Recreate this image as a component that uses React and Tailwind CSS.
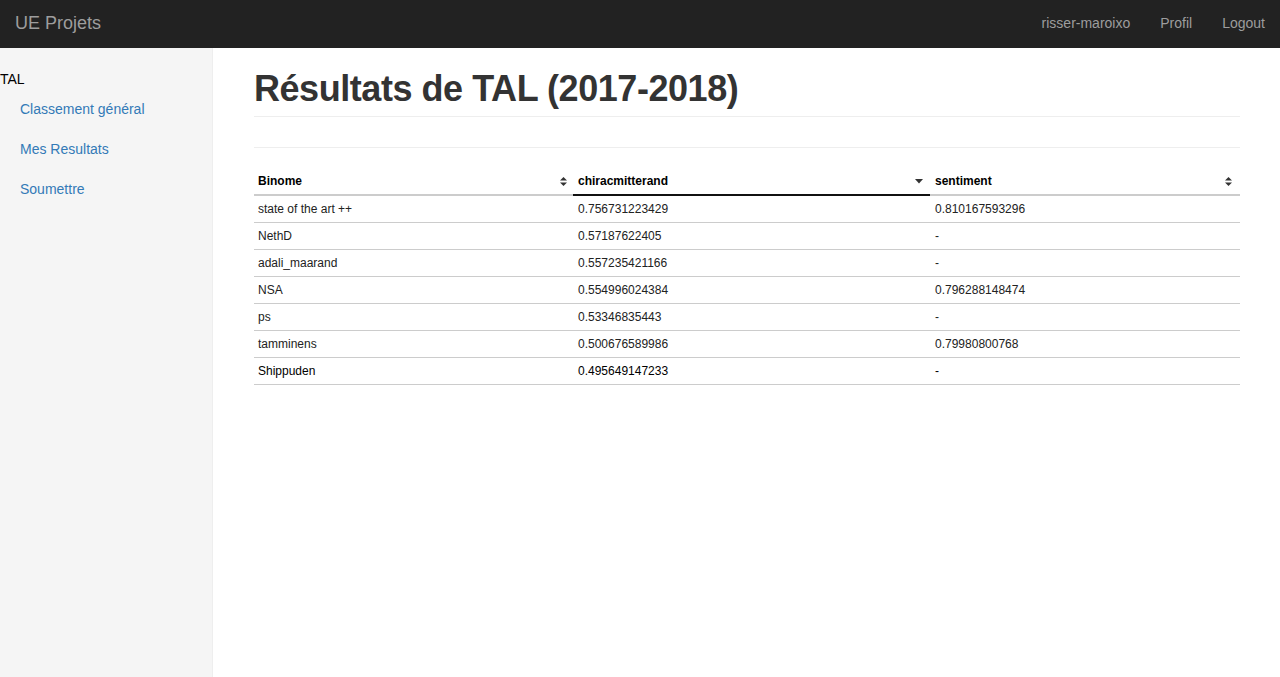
import React from 'react';

const rows = [
  ['state of the art ++', '0.756731223429', '0.810167593296'],
  ['NethD', '0.57187622405', '-'],
  ['adali_maarand', '0.557235421166', '-'],
  ['NSA', '0.554996024384', '0.796288148474'],
  ['ps', '0.53346835443', '-'],
  ['tamminens', '0.500676589986', '0.79980800768'],
  ['Shippuden', '0.495649147233', '-'],
];

function SortBoth() {
  return (
    <svg width="7" height="9" viewBox="0 0 7 9" className="shrink-0">
      <path d="M3.5 0L7 3.5H0z" fill="#333" />
      <path d="M3.5 9L0 5.5H7z" fill="#333" />
    </svg>
  );
}

function SortDesc() {
  return (
    <svg width="8" height="5" viewBox="0 0 8 5" className="shrink-0">
      <path d="M0 0H8L4 4.5z" fill="#333" />
    </svg>
  );
}

export default function App() {
  return (
    <div className="min-h-screen flex flex-col bg-white" style={{ fontFamily: '"Liberation Sans", Arial, sans-serif' }}>
      {/* Navbar */}
      <nav className="h-[48px] bg-[#222] flex items-center justify-between shrink-0 pb-[2px]">
        <span className="pl-[15px] text-[18px] text-[#9d9d9d]">UE Projets</span>
        <ul className="flex items-center pr-[15px] text-[14px] text-[#9d9d9d]">
          <li className="px-[15px]">risser-maroixo</li>
          <li className="px-[15px]">Profil</li>
          <li className="pl-[15px]">Logout</li>
        </ul>
      </nav>

      <div className="flex flex-1">
        {/* Sidebar */}
        <aside className="w-[213px] shrink-0 bg-[#f5f5f5] border-r border-[#eee] pt-[21px] text-[14px]">
          <div className="text-[#000] leading-[20px]">TAL</div>
          <ul>
            <li className="pl-[20px] h-[40px] flex items-center text-[#337ab7]">Classement général</li>
            <li className="pl-[20px] h-[40px] flex items-center text-[#337ab7]">Mes Resultats</li>
            <li className="pl-[20px] h-[40px] flex items-center text-[#337ab7]">Soumettre</li>
          </ul>
        </aside>

        {/* Main */}
        <main className="flex-1 pl-[41px] pr-[40px] pt-[21px]">
          <div className="pb-[7px] border-b border-[#eee]">
            <h1 className="text-[36px] leading-[40px] font-bold tracking-[-0.45px] text-[#333]">Résultats de TAL (2017-2018)</h1>
          </div>
          <div className="mt-[30px] border-t border-[#eee]"></div>

          <table className="mt-[21px] w-full border-collapse text-[12px] text-[#222]" style={{ fontFamily: 'Arial, "Liberation Sans", sans-serif' }}>
            <thead>
              <tr className="h-[26px] text-[#000]">
                <th className="w-[319px] text-left font-bold pl-[4px] pr-[6px] pb-[1px] border-b-2 border-[#ccc]">
                  <div className="flex items-center justify-between">
                    <span>Binome</span>
                    <SortBoth />
                  </div>
                </th>
                <th className="w-[357px] text-left font-bold pl-[5px] pr-[7px] pb-[1px] border-b-2 border-[#111]">
                  <div className="flex items-center justify-between">
                    <span>chiracmitterand</span>
                    <SortDesc />
                  </div>
                </th>
                <th className="text-left font-bold pl-[5px] pr-[8px] pb-[1px] border-b-2 border-[#ccc]">
                  <div className="flex items-center justify-between">
                    <span>sentiment</span>
                    <SortBoth />
                  </div>
                </th>
              </tr>
            </thead>
            <tbody>
              {rows.map((r, i) => (
                <tr key={i} className={`h-[27px] border-b border-[#ccc] ${i === rows.length - 1 ? 'text-[#000]' : ''}`}>
                  <td className="pl-[4px]">{r[0]}</td>
                  <td className="pl-[5px]">{r[1]}</td>
                  <td className="pl-[5px]">{r[2]}</td>
                </tr>
              ))}
            </tbody>
          </table>
        </main>
      </div>
    </div>
  );
}
